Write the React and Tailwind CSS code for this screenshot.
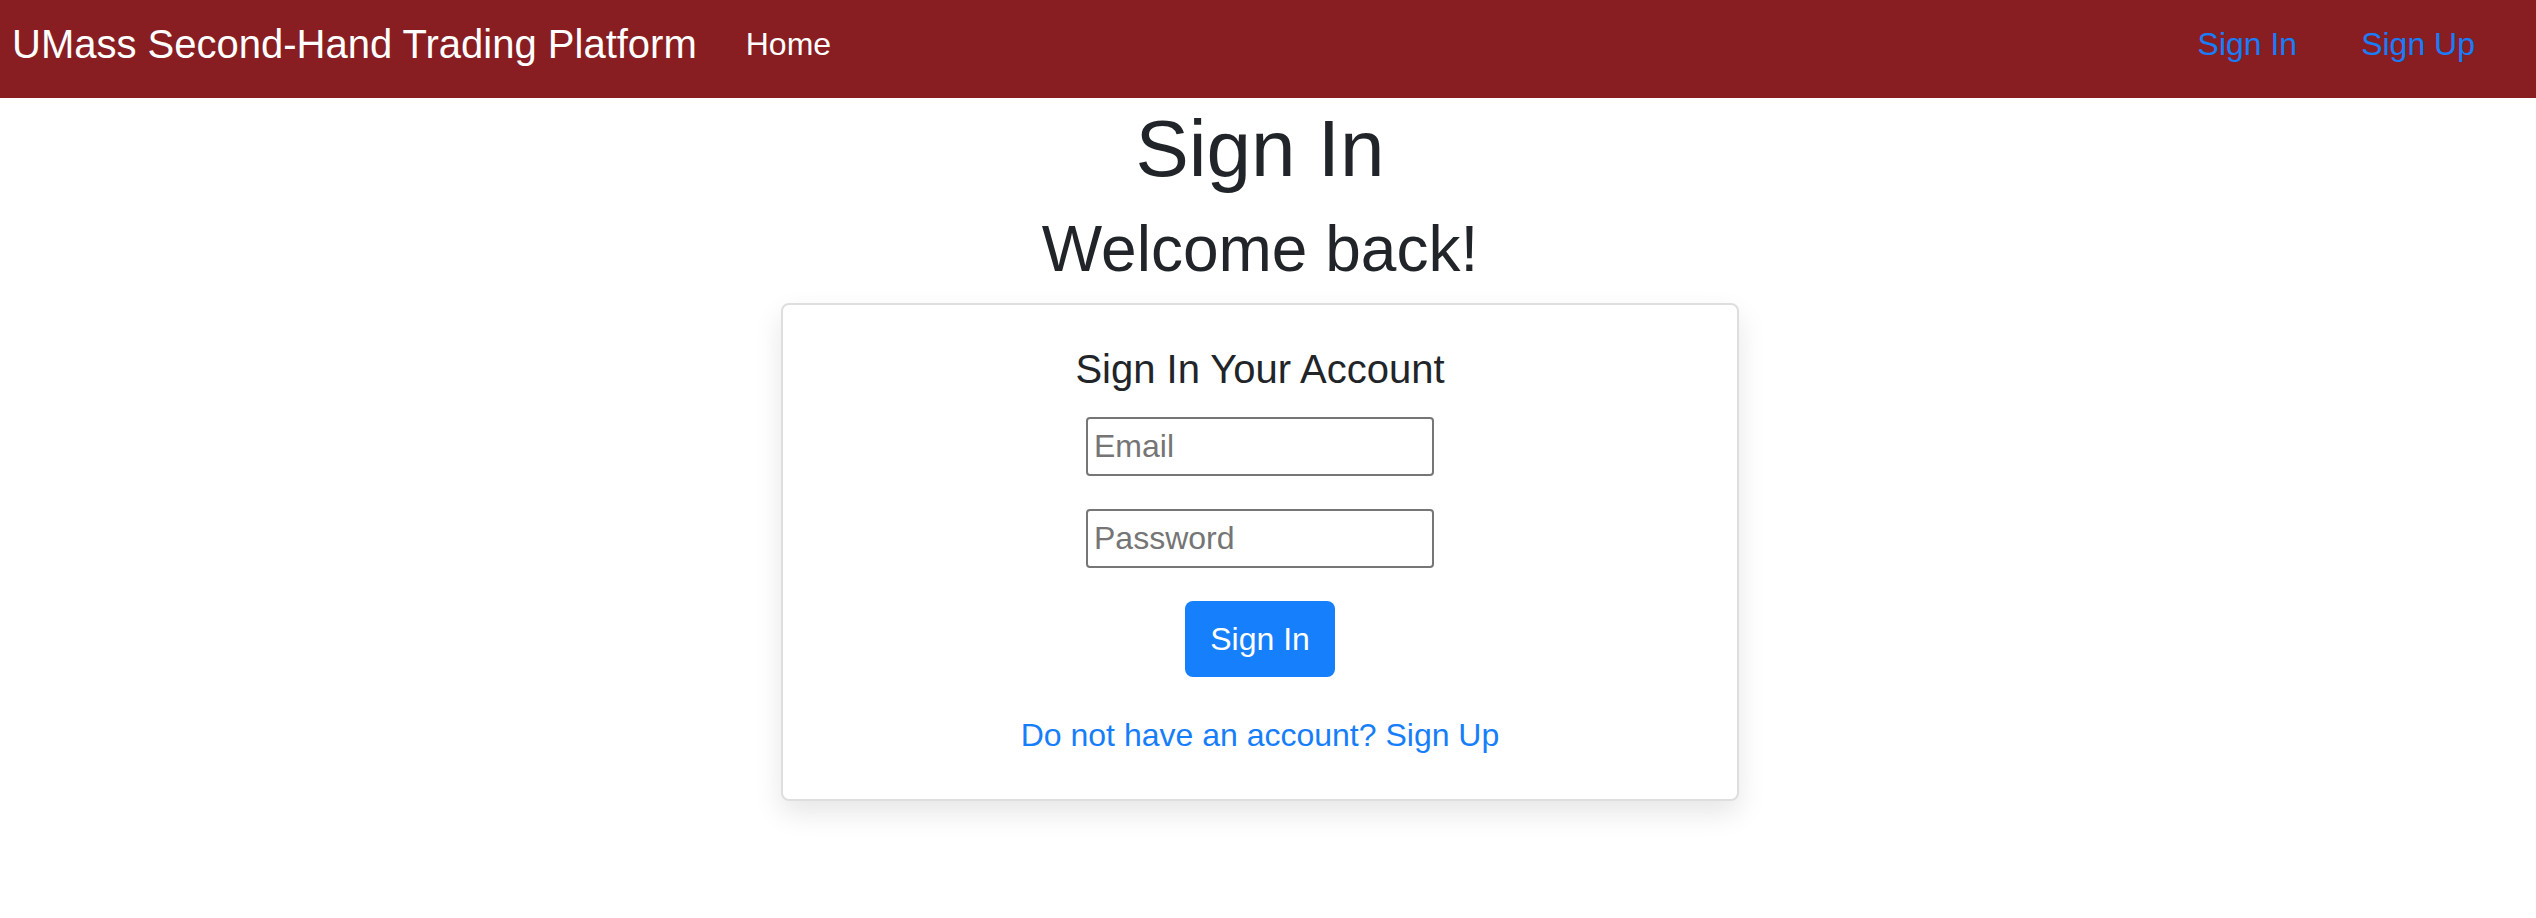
import { useState } from "react";

const font = { fontFamily: '"Liberation Sans", Arial, sans-serif' };

function Navbar() {
  return (
    <nav className="h-[98px] w-full bg-[#881d22] flex items-center justify-between pb-[11px] pl-[12px] pr-[61px]">
      <div className="flex items-center">
        <a href="#" className="text-[40px] leading-[60px] text-white whitespace-nowrap">
          UMass Second-Hand Trading Platform
        </a>
        <a href="#" className="ml-[49px] text-[32px] leading-[48px] text-white">
          Home
        </a>
      </div>
      <div className="flex items-center gap-[64px]">
        <a href="#" className="text-[32px] leading-[48px] text-[#167efb]">Sign In</a>
        <a href="#" className="text-[32px] leading-[48px] text-[#167efb]">Sign Up</a>
      </div>
    </nav>
  );
}

export default function App() {
  const [email, setEmail] = useState("");
  const [password, setPassword] = useState("");

  return (
    <div className="min-h-[918px] bg-white text-[#212529]" style={font}>
      <Navbar />
      <main className="w-[2520px] flex flex-col items-center">
        <h1 className="mt-[3px] text-[80px] leading-[96px] font-normal">Sign In</h1>
        <h2 className="mt-[14px] text-[64px] leading-[77px] font-normal">Welcome back!</h2>

        {/* card */}
        <div className="mt-[15px] w-[958px] border-2 border-[#dedede] rounded-[8px] bg-white shadow-[0_12px_28px_rgba(0,0,0,0.10)] flex flex-col items-center pt-[40px] pb-[40px]">
          <h5 className="text-[40px] leading-[48px] font-normal">Sign In Your Account</h5>
          <form className="flex flex-col items-center" onSubmit={(e) => e.preventDefault()}>
            <input
              type="email"
              placeholder="Email"
              value={email}
              onChange={(e) => setEmail(e.target.value)}
              className="mt-[24px] w-[348px] h-[59px] border-2 border-[#767676] rounded-[4px] px-[6px] text-[32px] text-[#212529] placeholder:text-[#757575] outline-none"
            />
            <input
              type="password"
              placeholder="Password"
              value={password}
              onChange={(e) => setPassword(e.target.value)}
              className="mt-[33px] w-[348px] h-[59px] border-2 border-[#767676] rounded-[4px] px-[6px] text-[32px] text-[#212529] placeholder:text-[#757575] outline-none"
            />
            <button
              type="submit"
              className="mt-[33px] w-[150px] h-[76px] rounded-[8px] bg-[#167ffc] text-white text-[32px] leading-[48px]"
            >
              Sign In
            </button>
          </form>
          <a href="#" className="mt-[34px] text-[32px] leading-[48px] text-[#167efb]">
            Do not have an account? Sign Up
          </a>
        </div>
      </main>
    </div>
  );
}
